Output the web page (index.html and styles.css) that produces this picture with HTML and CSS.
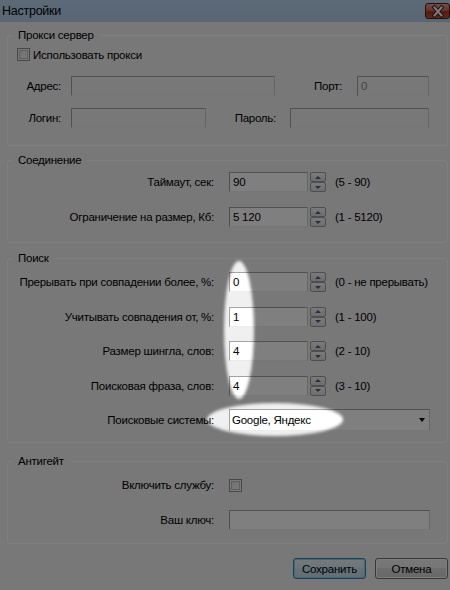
FILE: index.html
```html
<!DOCTYPE html>
<html lang="ru">
<head>
<meta charset="utf-8">
<title>Настройки</title>
<link rel="stylesheet" href="styles.css">
</head>
<body>
<div class="window">
  <div class="titlebar">
    <span class="title">Настройки</span>
    <div class="close">
      <svg width="22" height="13" viewBox="0 0 22 13">
        <path d="M7.5 2.5 L14.5 10.5 M14.5 2.5 L7.5 10.5" stroke="#3a2020" stroke-width="4" stroke-linecap="square"/>
        <path d="M7.5 2.5 L14.5 10.5 M14.5 2.5 L7.5 10.5" stroke="#f4f4f4" stroke-width="2" stroke-linecap="square"/>
      </svg>
    </div>
  </div>

  <div class="group g-proxy">
    <span class="legend">Прокси сервер</span>
    <div class="check-row">
      <span class="checkbox"></span>
      <span class="check-label">Использовать прокси</span>
    </div>
    <div class="row prow1">
      <span class="lbl w-addr">Адрес:</span>
      <span class="field disabled f-addr"></span>
      <span class="lbl w-port">Порт:</span>
      <span class="field disabled f-port"><span class="grey">0</span></span>
    </div>
    <div class="row prow2">
      <span class="lbl w-addr">Логин:</span>
      <span class="field disabled f-login"></span>
      <span class="lbl w-pass">Пароль:</span>
      <span class="field disabled f-pass"></span>
    </div>
  </div>

  <div class="group g-conn">
    <span class="legend">Соединение</span>
    <div class="row r-first">
      <span class="lbl w-main">Таймаут, сек:</span>
      <span class="field f-num">90</span>
      <span class="spin"><span class="sb up"></span><span class="sb down"></span></span>
      <span class="range">(5 - 90)</span>
    </div>
    <div class="row r-next">
      <span class="lbl w-main">Ограничение на размер, Кб:</span>
      <span class="field f-num">5 120</span>
      <span class="spin"><span class="sb up"></span><span class="sb down"></span></span>
      <span class="range">(1 - 5120)</span>
    </div>
  </div>

  <div class="group g-search">
    <span class="legend">Поиск</span>
    <div class="row s-first">
      <span class="lbl w-main">Прерывать при совпадении более, %:</span>
      <span class="field f-num">0</span>
      <span class="spin"><span class="sb up"></span><span class="sb down"></span></span>
      <span class="range">(0 - не прерывать)</span>
    </div>
    <div class="row s-next">
      <span class="lbl w-main">Учитывать совпадения от, %:</span>
      <span class="field f-num">1</span>
      <span class="spin"><span class="sb up"></span><span class="sb down"></span></span>
      <span class="range">(1 - 100)</span>
    </div>
    <div class="row s-next">
      <span class="lbl w-main">Размер шингла, слов:</span>
      <span class="field f-num">4</span>
      <span class="spin"><span class="sb up"></span><span class="sb down"></span></span>
      <span class="range">(2 - 10)</span>
    </div>
    <div class="row s-next">
      <span class="lbl w-main">Поисковая фраза, слов:</span>
      <span class="field f-num">4</span>
      <span class="spin"><span class="sb up"></span><span class="sb down"></span></span>
      <span class="range">(3 - 10)</span>
    </div>
    <div class="row combo-row">
      <span class="lbl w-main">Поисковые системы:</span>
      <span class="combo"><span class="combo-text">Google, Яндекс</span><span class="arrow"></span></span>
    </div>
  </div>

  <div class="group g-anti">
    <span class="legend">Антигейт</span>
    <div class="row a-first">
      <span class="lbl w-main">Включить службу:</span>
      <span class="checkbox cb-anti"></span>
    </div>
    <div class="row a-next">
      <span class="lbl w-main">Ваш ключ:</span>
      <span class="field f-key"></span>
    </div>
  </div>

  <div class="buttons">
    <button class="btn btn-default">Сохранить</button>
    <button class="btn">Отмена</button>
  </div>

  <svg class="dim" width="450" height="590" viewBox="0 0 450 590">
    <defs>
      <filter id="soft" x="-50%" y="-50%" width="200%" height="200%">
        <feGaussianBlur stdDeviation="1.6"/>
      </filter>
      <mask id="spot" maskUnits="userSpaceOnUse" x="0" y="0" width="450" height="590">
        <rect x="0" y="0" width="450" height="590" fill="#fff"/>
        <g filter="url(#soft)">
          <ellipse cx="239" cy="330" rx="15" ry="69" fill="#000"/>
          <ellipse cx="275" cy="419.5" rx="68" ry="16.5" fill="#000"/>
        </g>
      </mask>
    </defs>
    <rect x="0" y="0" width="450" height="590" fill="#000" fill-opacity="0.5" mask="url(#spot)"/>
  </svg>
</div>
</body>
</html>
```

FILE: styles.css
```css
body {
  margin: 0;
  font-family: "Liberation Sans", Arial, sans-serif;
  font-size: 11.5px;
  letter-spacing: -0.25px;
  color: #000;
}

.window {
  position: relative;
  width: 450px;
  height: 590px;
  background: #f0f0f0;
  overflow: hidden;
}

.titlebar {
  height: 22px;
  background: linear-gradient(#b9d3ef, #b2cdea);
  display: flex;
  justify-content: space-between;
  align-items: flex-start;
}

.title {
  margin: 3px 0 0 2px;
  font-size: 12.5px;
  line-height: 16px;
}

.close {
  box-sizing: border-box;
  width: 25px;
  height: 16px;
  margin-top: 3px;
  border: 1px solid #4a2018;
  border-radius: 3px;
  background: linear-gradient(#e89a88 0%, #d06a54 45%, #a8301c 55%, #c2543c 100%);
  display: flex;
  align-items: center;
  justify-content: center;
}

.close svg {
  display: block;
}

.group {
  box-sizing: border-box;
  width: 441px;
  margin-left: 7px;
  border: 1px solid #ffffff;
  border-radius: 3px;
}

.legend {
  display: block;
  width: max-content;
  margin: -8px 0 0 4px;
  padding: 0 6px;
  background: #f0f0f0;
  line-height: 15px;
}

.g-proxy { margin-top: 13px; padding-bottom: 17px; }
.g-conn { margin-top: 14px; padding-bottom: 15px; }
.g-search { margin-top: 15px; padding-bottom: 11px; }
.g-anti { margin-top: 18px; padding-bottom: 13px; }

.check-row {
  display: flex;
  align-items: center;
  height: 15px;
  margin-top: 4px;
}

.check-row .checkbox { margin-left: 9px; }
.check-label { margin-left: 3px; }

.checkbox {
  box-sizing: border-box;
  width: 13px;
  height: 13px;
  border: 1px solid #8e8f8f;
  background: linear-gradient(135deg, #dcdcdc, #fbfbfb);
  box-shadow: inset 0 0 0 1px #f4f4f4, inset 0 0 0 2px #b8bcc2;
  flex: none;
}

.row {
  display: flex;
  align-items: center;
  height: 20px;
}

.prow1 { margin-top: 14px; }
.prow2 { margin-top: 12px; }
.r-first { margin-top: 4px; }
.r-next { margin-top: 15px; }
.s-first { margin-top: 6px; }
.s-next { margin-top: 14.5px; }
.combo-row { margin-top: 13.5px; height: 22px; }
.a-first { margin-top: 6px; }
.a-next { margin-top: 15px; }

.lbl {
  flex: none;
  text-align: right;
  white-space: nowrap;
}

.w-addr { width: 53px; }
.w-port { width: 67px; }
.w-pass { width: 70px; }
.w-main { width: 206px; }

.field {
  box-sizing: border-box;
  height: 20px;
  flex: none;
  border: 1px solid;
  border-color: #a3a3a3 #cdcdcd #ececec #a3a3a3;
  background: #ffffff;
  padding: 0 3px;
  line-height: 18px;
  white-space: nowrap;
}

.field.disabled { background: #f0f0f0; }
.grey { color: #8a8a8a; }

.f-addr { margin-left: 10px; width: 204px; }
.f-port { margin-left: 15px; width: 72px; }
.f-login { margin-left: 10px; width: 135px; }
.f-pass { margin-left: 14px; width: 139px; }
.f-num { margin-left: 15px; width: 79px; }
.f-key { margin-left: 15px; width: 201px; }

.cb-anti { margin-left: 15px; }

.spin {
  flex: none;
  display: flex;
  flex-direction: column;
  width: 16px;
  height: 20px;
  margin-left: 2px;
}

.sb {
  box-sizing: border-box;
  height: 10px;
  border: 1px solid #9c9c9c;
  border-radius: 2px;
  background: linear-gradient(#f6f6f6, #dcdcdc);
  display: flex;
  align-items: center;
  justify-content: center;
}

.sb::before {
  content: "";
  width: 0;
  height: 0;
  border-left: 3px solid transparent;
  border-right: 3px solid transparent;
}

.up::before { border-bottom: 3px solid #4d5f86; }
.down::before { border-top: 3px solid #4d5f86; }

.range {
  margin-left: 9px;
  white-space: nowrap;
}

.combo {
  box-sizing: border-box;
  margin-left: 15px;
  width: 201px;
  height: 22px;
  border: 1px solid;
  border-color: #a3a3a3 #cdcdcd #ececec #a3a3a3;
  background: #ffffff;
  display: flex;
  align-items: center;
  justify-content: space-between;
  padding-left: 2px;
}

.arrow {
  width: 0;
  height: 0;
  margin-right: 4px;
  border-left: 3.5px solid transparent;
  border-right: 3.5px solid transparent;
  border-top: 4px solid #000;
}

.buttons {
  display: flex;
  justify-content: flex-end;
  gap: 9px;
  margin-top: 14px;
  padding-right: 2px;
}

.btn {
  box-sizing: border-box;
  width: 73px;
  height: 21px;
  padding: 0;
  font: inherit;
  letter-spacing: inherit;
  color: #000;
  border: 1px solid #707070;
  border-radius: 3px;
  background: linear-gradient(#f2f2f2 0%, #ebebeb 49%, #dddddd 50%, #cfcfcf 100%);
  box-shadow: inset 0 0 0 1px #fcfcfc;
}

.btn-default {
  border-color: #3c7fb1;
  background: linear-gradient(#e8f2f8 0%, #dcecf6 49%, #cde4f2 50%, #c0dcee 100%);
  box-shadow: inset 0 0 0 1px #7fd6f4;
}

.dim {
  position: absolute;
  left: 0;
  top: 0;
  pointer-events: none;
}
```
